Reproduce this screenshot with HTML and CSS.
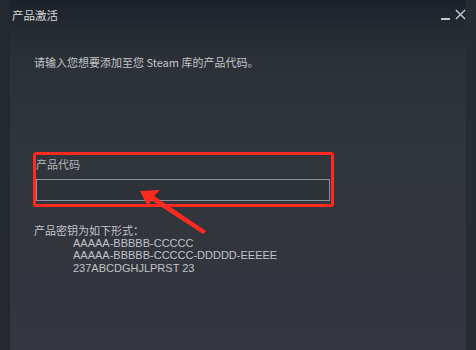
FILE: index.html
```html
<!DOCTYPE html>
<html>
<head>
<meta charset="utf-8">
<link rel="stylesheet" href="styles.css">
</head>
<body>
<div class="window">
  <div class="titlebar">
    <span class="title">产品激活</span>
    <div class="controls">
      <span class="min"></span>
      <svg class="close" width="12" height="12" viewBox="0 0 12 12"><path d="M1 1 L11 11 M11 1 L1 11" stroke="#c4c7ca" stroke-width="1.6"/></svg>
    </div>
  </div>
  <div class="content">
    <p class="intro">请输入您想要添加至您 Steam 库的产品代码。</p>
    <div class="field">
      <div class="label">产品代码</div>
      <div class="input"></div>
    </div>
    <div class="formats">
      <div class="fhead">产品密钥为如下形式：</div>
      <div class="fline">AAAAA-BBBBB-CCCCC</div>
      <div class="fline">AAAAA-BBBBB-CCCCC-DDDDD-EEEEE</div>
      <div class="fline">237ABCDGHJLPRST 23</div>
    </div>
  </div>
  <svg class="arrow" width="476" height="350" viewBox="0 0 476 350">
    <polygon points="140,191 160,190 154,196 206,231 203,234 151,200 148,207" fill="#ff2a1f"/>
  </svg>
</div>
</body>
</html>
```
FILE: styles.css
```css
* { box-sizing: border-box; }
html, body { margin: 0; padding: 0; }
body {
  width: 476px; height: 350px; overflow: hidden;
  font-family: "Noto Sans CJK SC", "Liberation Sans", sans-serif;
  background: #30343b;
}
.window {
  position: relative;
  width: 476px; height: 350px;
  background: linear-gradient(to bottom, #1c222c 0px, #262a31 30px, #2c3037 60px, #30343b 140px, #33363e 350px);
  display: flex; flex-direction: column;
  border-left: 10px solid #242930;
  border-right: 10px solid #272b32;
}
.titlebar {
  height: 32px;
  display: flex; align-items: flex-start; justify-content: space-between;
  padding: 7px 0 0 2px;
}
.title { font-size: 11.5px; color: #d6d8da; line-height: 16px; }
.controls { display: flex; align-items: flex-start; gap: 5px; margin-right: 0px; margin-top: 2px;}
.min { width: 9px; height: 2px; background: #c4c7ca; margin-top: 9px; }
.close { display: block; width: 11px; height: 11px; }
.content { padding: 0 0 0 24px; color: #b9bcbf; font-size: 11px; }
.intro { margin: 22px 0 0 0; line-height: 16px; font-size: 11px; color: #c2c5c8; }
.field {
  margin-top: 82px;
  width: 301px; height: 55px;
  border: 3px solid #ff2a1f; border-radius: 3px;
  position: relative; left: -1px;
  padding: 1px 4px 0 0;
}
.label { font-size: 11px; line-height: 16px; color: #b3b7ba; margin-left: 0px; }
.input {
  margin-top: 7px; width: 294px; height: 22px;
  border: 1px solid #8a93a0; background: #2d3138;
}
.formats { margin-top: 17px; font-size: 11px; line-height: 12.5px; color: #c0c3c6; }
.fline { margin-left: 39px; font-family: "Liberation Sans", sans-serif; font-size: 11px; }
.arrow { position: absolute; left: -10px; top: 0; pointer-events: none; }
```
